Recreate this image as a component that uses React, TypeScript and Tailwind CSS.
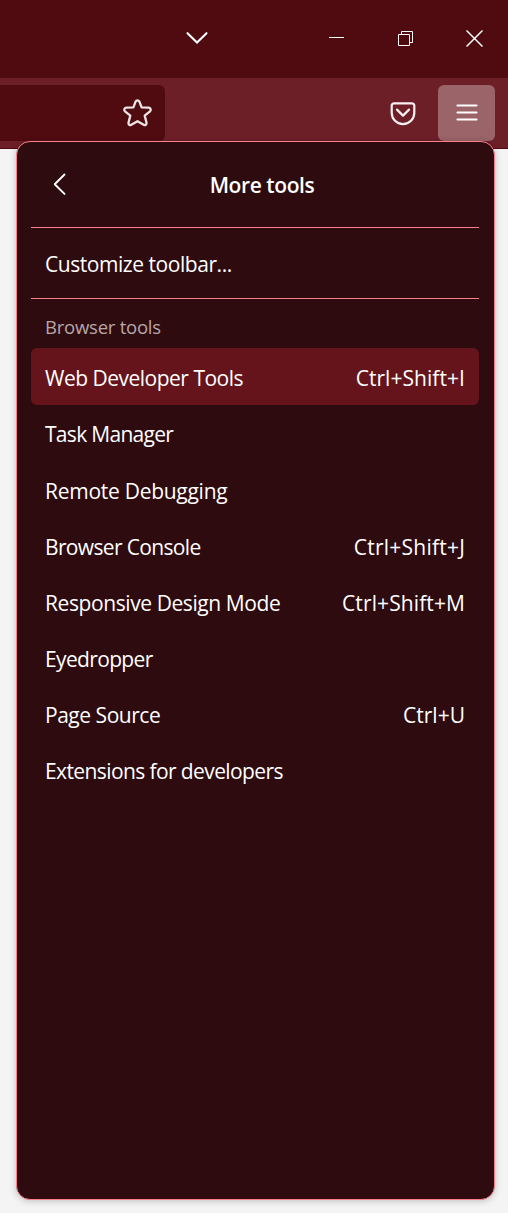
import React from "react";

type Item = { label: string; spacing: string; shortcut?: string; keySpacing?: string; active?: boolean };

const items: Item[] = [
  { label: "Web Developer Tools", spacing: "tracking-[-0.5px]", shortcut: "Ctrl+Shift+I", keySpacing: "tracking-[0.05px]", active: true },
  { label: "Task Manager", spacing: "tracking-[-0.7px]" },
  { label: "Remote Debugging", spacing: "tracking-[-0.27px]" },
  { label: "Browser Console", spacing: "tracking-[-0.65px]", shortcut: "Ctrl+Shift+J", keySpacing: "tracking-[0.22px]" },
  { label: "Responsive Design Mode", spacing: "tracking-[-0.41px]", shortcut: "Ctrl+Shift+M", keySpacing: "tracking-[0.1px]" },
  { label: "Eyedropper", spacing: "tracking-[-0.65px]" },
  { label: "Page Source", spacing: "tracking-[-0.47px]", shortcut: "Ctrl+U", keySpacing: "tracking-[0px]" },
  { label: "Extensions for developers", spacing: "tracking-[-0.6px]" },
];

function TitleBar() {
  return (
    <header className="flex h-[78px] items-start bg-[#500b11] pt-[29px] pl-[186px] text-white">
      <svg width="22" height="19" viewBox="0 0 22 19" fill="none" stroke="currentColor" strokeWidth="2.100" strokeLinecap="round" strokeLinejoin="miter">
        <path d="M1.500 4.200 11 13.500 20.500 4.200" />
      </svg>
      <svg className="ml-[121px]" width="15" height="19" viewBox="0 0 15 19" shapeRendering="crispEdges">
        <path d="M0 8h15v1H0z" fill="currentColor" />
      </svg>
      <svg className="ml-[54px]" width="15" height="19" viewBox="0 0 15 19" fill="none" stroke="currentColor">
        <path d="M.5 5.500h11v11H.5zM3.500 5.500v-3h11v11h-3" />
      </svg>
      <svg className="ml-[53px]" width="17" height="19" viewBox="0 0 17 19" fill="none" stroke="currentColor" strokeWidth="1.500">
        <path d="m.5 1.500 16 16M16.500 1.500l-16 16" />
      </svg>
    </header>
  );
}

function NavBar() {
  return (
    <div className="flex h-[71px] items-start border-b border-[#500b11] bg-[#6d1f28] pt-[7px] text-[#fbf0f1]">
      <div className="flex h-14 w-[165px] justify-end rounded-r-[6px] bg-[#500b11] pt-[13px] pr-[12px] text-[#ede4e5]">
        <svg width="31" height="31" viewBox="0 0 31 31" fill="none" stroke="currentColor" strokeWidth="2.300" strokeLinejoin="round">
          <path d="M13.700 3.400c.7-1.500 2.900-1.500 3.600 0l2.300 6 7.200.3c1.900.2 2.600 2.400 1.200 3.600l-5.300 4.300 1.800 7.200c.4 1.700-1.300 2.900-2.800 2l-6.200-3.600-6.200 3.600c-1.500.9-3.200-.3-2.800-2l1.800-7.200L3 13.300c-1.400-1.200-.7-3.400 1.200-3.600l7.200-.3z" />
        </svg>
      </div>
      <svg className="mt-[15px] ml-[225px]" width="26" height="26" viewBox="0 0 26 26" fill="none" stroke="currentColor" strokeWidth="2.200" strokeLinecap="round" strokeLinejoin="round">
        <path d="M4 3.300h18a2.300 2.300 0 0 1 2.300 2.300v7.200a11.300 11.300 0 0 1-22.600 0V5.600A2.300 2.300 0 0 1 4 3.300z" />
        <path d="m7 9.600 6 6 6-6" />
      </svg>
      <div className="ml-[22px] flex h-14 w-[57px] items-center justify-center rounded-[6px] bg-[#9a6469] text-white">
        <svg className="ml-px" width="22" height="20" viewBox="0 0 22 20" fill="none" stroke="currentColor" strokeWidth="2.200" strokeLinecap="round">
          <path d="M1.500 2.500h19M1.500 9.500h19M1.500 16.500h19" />
        </svg>
      </div>
    </div>
  );
}

function MenuPanel() {
  return (
    <section className="absolute top-[141px] left-4 h-[1059px] w-[479px] rounded-[14px] border border-[#fb7f8d] bg-[#2d0b0f] pr-[15px] pl-[14px] text-white shadow-[0_1px_7px_rgba(0,0,0,0.22)]">
      <div className="relative flex h-[86px] items-center justify-center border-b border-[#fb7f8d]">
        <svg className="absolute top-[30px] left-[21px]" width="16" height="24" viewBox="0 0 16 24" fill="none" stroke="currentColor" strokeWidth="1.900" strokeLinecap="round" strokeLinejoin="round">
          <path d="M12.500 2.500 2.700 12.200l9.800 9.700" />
        </svg>
        <h1 className="pt-[3px] pl-[14px] text-[21px] font-semibold tracking-[-0.42px] whitespace-nowrap">More tools</h1>
      </div>
      <div className="flex h-[71px] items-center border-b border-[#fb7f8d] pt-1 pl-[14px] text-[21px] tracking-[-0.45px] whitespace-nowrap">
        <span>Customize toolbar...</span>
      </div>
      <h2 className="flex h-[49px] items-center pt-[7px] pl-[14px] text-[18.500px] tracking-[-0.23px] whitespace-nowrap text-[#b9a6a8]">
        <span>Browser tools</span>
      </h2>
      <ul>
        {items.map((item) => (
          <li
            key={item.label}
            className={`flex items-center justify-between rounded-[6px] px-[14px] text-[21px] whitespace-nowrap ${
              item.active ? "mb-[-0.750px] h-[57px] bg-[#65141b] pt-[5px]" : "h-[56.200px] pt-[5.500px]"
            }`}
          >
            <span className={item.spacing}>{item.label}</span>
            {item.shortcut && <span className={item.keySpacing}>{item.shortcut}</span>}
          </li>
        ))}
      </ul>
    </section>
  );
}

export default function App() {
  return (
    <main className="relative h-[1213px] w-[508px] overflow-hidden bg-[#f4f4f4] font-['Open_Sans','Noto_Sans',sans-serif]">
      <TitleBar />
      <NavBar />
      <MenuPanel />
    </main>
  );
}
